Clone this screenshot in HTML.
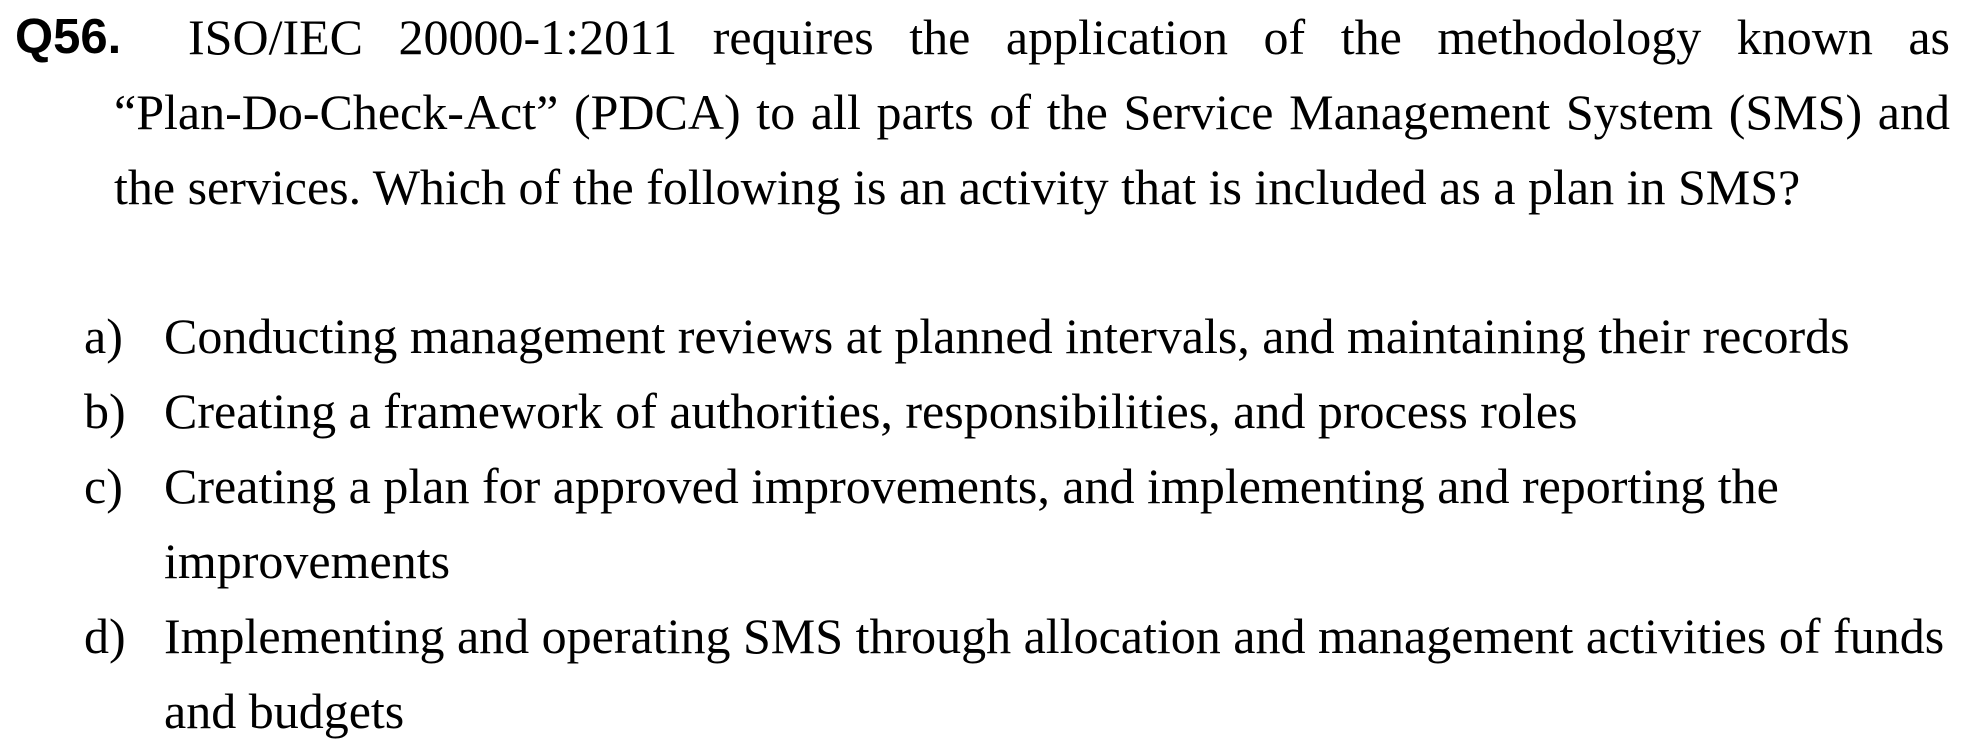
<!DOCTYPE html>
<html><head><meta charset="utf-8"><style>
body{margin:0;width:1966px;height:754px;background:#fff;position:relative;overflow:hidden;color:#000;font-family:"Liberation Serif",serif;font-size:50px;}
.q{position:absolute;left:15px;top:0;line-height:75px;font-family:"Liberation Sans",sans-serif;font-weight:bold;font-size:49px;}
.ln{position:absolute;line-height:75px;white-space:nowrap;}
.j{text-align:justify;text-align-last:justify;white-space:normal;}
.o{position:absolute;left:84px;width:1870px;line-height:75px;white-space:nowrap;}
.o span.l{position:absolute;left:0;}
.o div{margin-left:80px;}
</style></head><body>
<div class="q">Q56.</div>
<div class="ln j" style="left:188px;top:0;width:1762px">ISO/IEC 20000-1:2011 requires the application of the methodology known as</div>
<div class="ln j" style="left:114px;top:75px;width:1836px">“Plan-Do-Check-Act” (PDCA) to all parts of the Service Management System (SMS) and</div>
<div class="ln" style="left:114px;top:150px">the services. Which of the following is an activity that is included as a plan in SMS?</div>
<div class="o" style="top:299px"><span class="l">a)</span><div>Conducting management reviews at planned intervals, and maintaining their records</div></div>
<div class="o" style="top:374px"><span class="l">b)</span><div>Creating a framework of authorities, responsibilities, and process roles</div></div>
<div class="o" style="top:449px"><span class="l">c)</span><div>Creating a plan for approved improvements, and implementing and reporting the<br>improvements</div></div>
<div class="o" style="top:599px"><span class="l">d)</span><div>Implementing and operating SMS through allocation and management activities of funds<br>and budgets</div></div>
</body></html>
